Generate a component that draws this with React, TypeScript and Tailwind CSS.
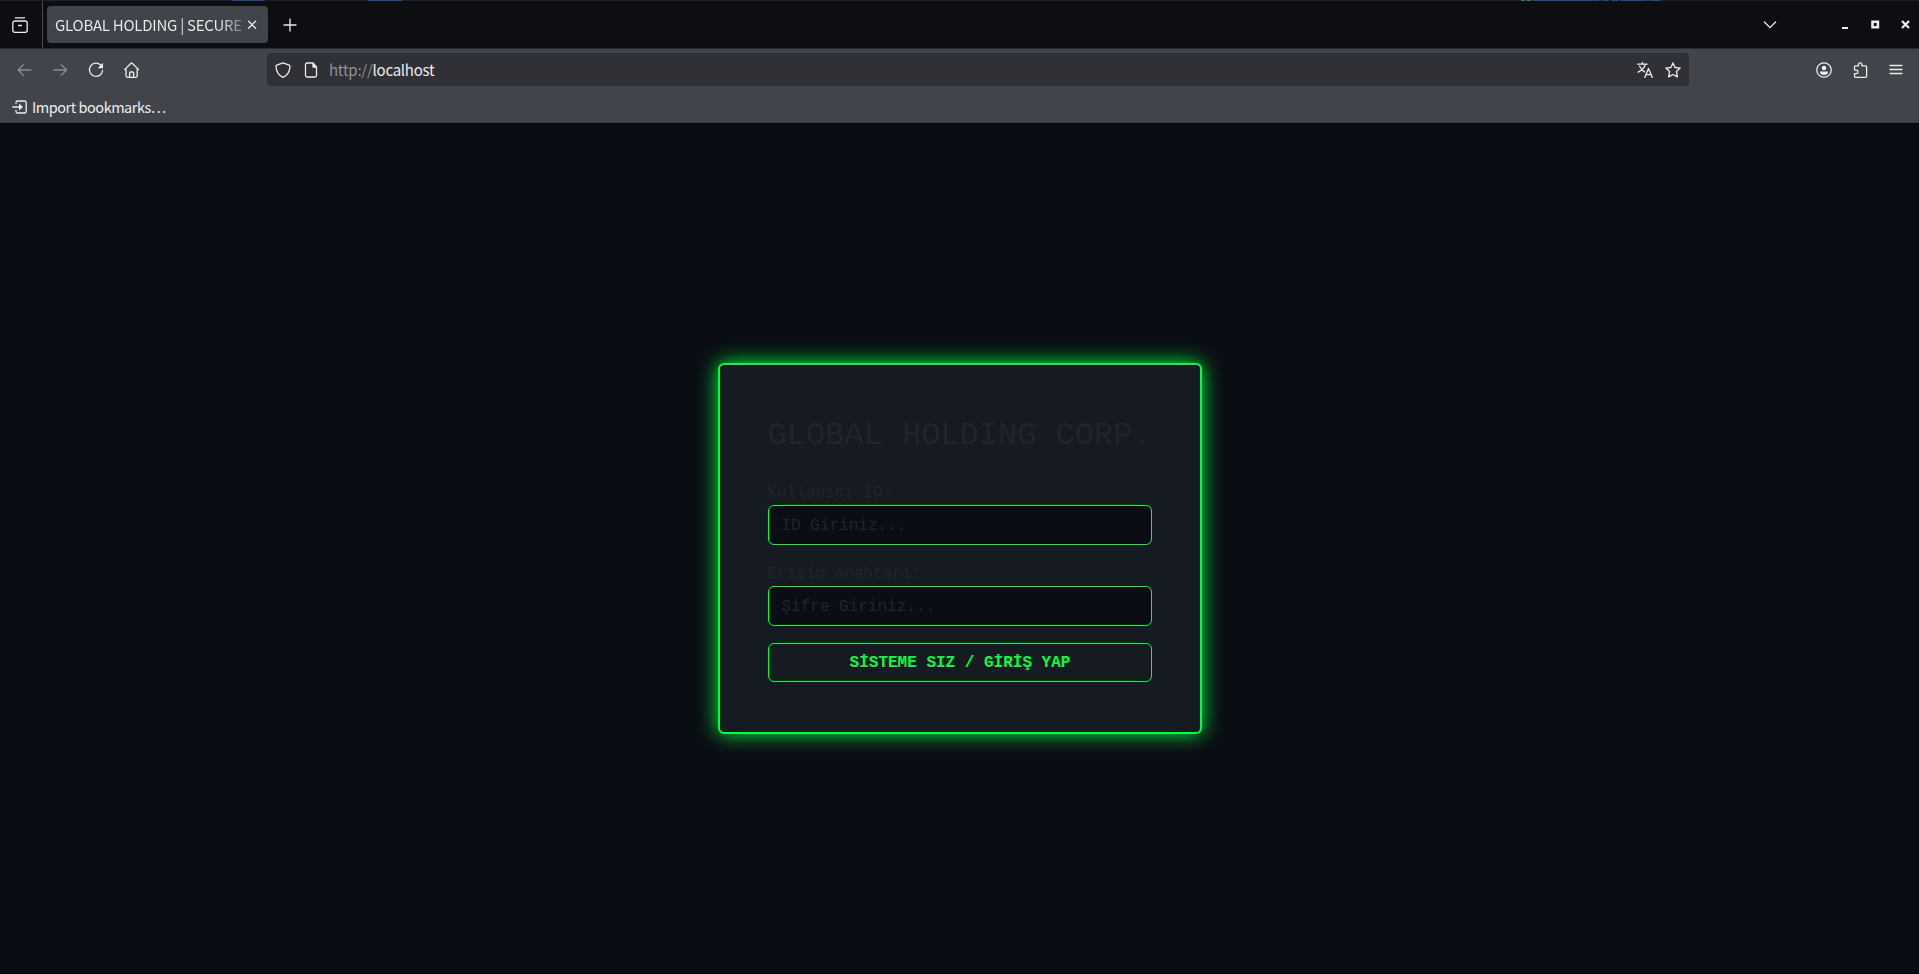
import type { ReactNode } from "react";

function Icon({ children, className = "" }: { children: ReactNode; className?: string }) {
  return (
    <svg
      viewBox="0 0 16 16"
      fill="none"
      stroke="currentColor"
      strokeWidth="1.3"
      strokeLinecap="round"
      strokeLinejoin="round"
      className={`size-4 shrink-0 ${className}`}
    >
      {children}
    </svg>
  );
}

function DesktopEdge() {
  return (
    <div className="flex h-px w-full shrink-0 bg-[#1c1f2c]">
      <div className="ml-[232px] w-8 bg-[#1e4a9a]" />
      <div className="ml-[104px] w-[34px] bg-[#1e4a9a]" />
      <div className="ml-[1119px] w-1 bg-[#0f8f7a]" />
      <div className="ml-[2px] w-1 bg-[#0f8f7a]" />
      <div className="ml-[2px] w-[65px] bg-[#1e4a9a]" />
      <div className="ml-px w-[2px] bg-[#1e4a9a]" />
      <div className="ml-[2px] w-[6px] bg-[#1e4a9a]" />
      <div className="ml-[3px] w-[6px] bg-[#1e4a9a]" />
      <div className="ml-[2px] w-[25px] bg-[#1e4a9a]" />
      <div className="ml-px w-[2px] bg-[#1e4a9a]" />
      <div className="ml-px w-[12px] bg-[#1e4a9a]" />
      <div className="flex-1 bg-[#231a22]" />
    </div>
  );
}

function TabStrip() {
  return (
    <div className="flex h-[47px] shrink-0 items-center bg-[#0d0e12] text-[#ececee]">
      <Icon className="ml-3">
        <path d="M3.4 .8h9.2M.8 6a2 2 0 0 1 2-2h10.4a2 2 0 0 1 2 2v7.300a2 2 0 0 1-2 2H2.8a2 2 0 0 1-2-2zM6.6 8.500h2.8" />
      </Icon>
      <div className="ml-[14px] h-[47px] w-px bg-[#4b4c52]" />
      <div className="ml-1 flex h-[37px] w-[221px] items-center rounded bg-[#42444b] pl-[8px]">
        <span className="w-[188px] bg-linear-to-r from-[#ececee] from-88% to-[#77787f] bg-clip-text font-['Noto_Sans_CJK_SC',sans-serif] text-[15px] leading-6 tracking-[-0.26px] whitespace-nowrap text-transparent">
          GLOBAL HOLDING | SECURE
        </span>
        <Icon className="ml-[1px]">
          <path d="M4.6 4.2l7 7M11.6 4.2l-7 7" />
        </Icon>
      </div>
      <Icon className="ml-[14px]">
        <path d="M8 2v12M2 8h12" />
      </Icon>
      <Icon className="ml-auto">
        <path d="M2.4 5l5.6 5.6L13.6 5" />
      </Icon>
      <svg viewBox="0 0 9 9" className="ml-[63px] size-[9px]">
        <path d="M1 7h6v2H1z" fill="currentColor" />
      </svg>
      <svg viewBox="0 0 9 9" className="ml-[21px] size-[9px]">
        <path d="M1.500 1.800h5.400v5.400H1.500z" fill="none" stroke="currentColor" strokeWidth="2.6" />
      </svg>
      <svg viewBox="0 0 9 9" className="mr-[9px] ml-[21px] size-[9px]">
        <path d="M1 1l7 7M8 1L1 8" stroke="currentColor" strokeWidth="2.2" />
      </svg>
    </div>
  );
}

function NavBar() {
  return (
    <div className="flex h-[41px] shrink-0 items-center text-[#ececee]">
      <Icon className="ml-4 text-[#8b8c91]">
        <path d="M7.500 2.6L2.100 8l5.400 5.400M2.100 8H15" />
      </Icon>
      <Icon className="ml-5 text-[#8b8c91]">
        <path d="M9.200 2.6L14.600 8l-5.400 5.400M14.600 8H1.700" />
      </Icon>
      <Icon className="ml-5">
        <path d="M12.8 3.2A6.6 6.6 0 1 0 14.6 8.5" />
        <path d="M15 .8v5.4H9.6z" fill="currentColor" stroke="none" />
      </Icon>
      <Icon className="ml-5">
        <path d="M.600 7.6L7 1.2a.9.9 0 0 1 1.2 0L14.600 7.6M2 6.8v7a1.5 1.5 0 0 0 1.5 1.5h8.2a1.5 1.5 0 0 0 1.5-1.5v-7M5.600 15v-4a1 1 0 0 1 1-1h2a1 1 0 0 1 1 1v4" />
      </Icon>
      <div className="ml-[127px] flex h-[33px] w-[1422px] items-center rounded bg-[#303136]">
        <Icon className="ml-2">
          <path d="M8 .8l6.2 2.4c.7.3.9.8.8 1.5-.4 4.9-2.4 8.600-7 10.700C3.400 13.300 1.400 9.600 1 4.700c-.1-.7.1-1.200.8-1.500z" />
        </Icon>
        <Icon className="ml-3">
          <path d="M9.500 1H4a1.500 1.500 0 0 0-1.500 1.500v11A1.500 1.500 0 0 0 4 15h8a1.500 1.500 0 0 0 1.500-1.500V5.500" />
          <path d="M10 1l3.500 4H10z" fill="currentColor" />
        </Icon>
        <span className="ml-[10px] font-['Noto_Sans_CJK_SC',sans-serif] text-[15px] leading-6 tracking-[-0.25px]">
          <span className="text-[#8f9095]">http://</span>localhost
        </span>
        <Icon className="ml-auto">
          <path d="M.7 2.200h9.400M5.400.5v1.700M8.400 2.400C7.500 5.700 4.700 8.400 1.200 10.200M2.600 4.200C4 7 5.500 8.700 7.500 9.900M7.800 15.400l3.700-9 3.800 9M9.200 12.600h4.700" />
        </Icon>
        <Icon className="mr-2 ml-3">
          <path d="M8 .9l2.100 4.600 5.100.6-3.800 3.500 1 5.300L8 12.500l-4.400 2.400 1-5.300L.8 6.100l5.100-.6z" />
        </Icon>
      </div>
      <Icon className="ml-auto">
        <circle cx="8" cy="8" r="7.200" />
        <circle cx="8" cy="6" r="2.300" fill="currentColor" stroke="none" />
        <path d="M3.900 9.400h8.200c0 2.300-1.700 3.600-4.100 3.600S3.900 11.700 3.900 9.400z" fill="currentColor" stroke="none" />
      </Icon>
      <Icon className="ml-5">
        <path d="M6.500 3.800V2.600a1.700 1.700 0 0 1 3.400 0v1.200h3.700a1 1 0 0 1 1 1v9.500a1 1 0 0 1-1 1H3.500a1 1 0 0 1-1-1v-2.600h1.700a1.800 1.800 0 0 0 0-3.600H2.500V4.800a1 1 0 0 1 1-1z" />
      </Icon>
      <Icon className="mr-[15px] ml-5">
        <path d="M2 3.500h12M2 7.500h12M2 11.500h12" />
      </Icon>
    </div>
  );
}

function BookmarksBar() {
  return (
    <div className="flex h-[33px] shrink-0 items-center border-b border-[#3a3c42] pt-px text-[#ececee]">
      <Icon className="ml-3">
        <path d="M4 4.500V3.500A1.500 1.500 0 0 1 5.500 2h7.200a1.500 1.500 0 0 1 1.500 1.500v9a1.500 1.500 0 0 1-1.500 1.500H5.500A1.500 1.500 0 0 1 4 12.500v-1M.8 8H9" />
        <path d="M7 4.400L11 8l-4 3.600z" fill="currentColor" stroke="none" />
      </Icon>
      <span className="ml-1 pt-px font-['Noto_Sans_CJK_SC',sans-serif] text-[14.5px] leading-6 tracking-[-0.47px]">
        Import bookmarks…
      </span>
    </div>
  );
}

function LoginCard() {
  return (
    <form className="w-[484px] rounded-md border-2 border-[#00ff41] bg-[#161a21] px-12 pt-12 pb-[50px] text-[#212529] shadow-[0_0_20px_#00ff41]">
      <h2 className="mb-[22px] text-[32px] leading-[45px] whitespace-nowrap">GLOBAL HOLDING CORP.</h2>
      <label className="block">
        <span className="block h-[25.6px] pt-px">Kullanıcı ID:</span>
        <input
          placeholder="ID Giriniz..."
          className="mb-4 block h-[39.6px] w-full rounded-md border border-[#00ff41] bg-[#0a0e14] pt-[2px] pr-3 pl-[13px] placeholder:text-[#212529]"
        />
      </label>
      <label className="block">
        <span className="block h-[25.6px] pt-px">Erişim Anahtarı:</span>
        <input
          placeholder="Şifre Giriniz..."
          className="mb-[17px] block h-[39.6px] w-full rounded-md border border-[#00ff41] bg-[#0a0e14] pt-[2px] pr-3 pl-[13px] placeholder:text-[#212529]"
        />
      </label>
      <button
        type="button"
        className="block h-[39.6px] w-full rounded-md border border-[#00ff41] pt-[3px] pl-px font-bold text-[#00ff41]"
      >
        SİSTEME SIZ / GİRİŞ YAP
      </button>
    </form>
  );
}

export default function App() {
  return (
    <div className="flex h-[974px] w-[1919px] flex-col overflow-hidden bg-[#42444b]">
      <DesktopEdge />
      <TabStrip />
      <div className="h-px shrink-0 bg-[#2b2c31]" />
      <NavBar />
      <BookmarksBar />
      <main className="flex flex-1 items-center justify-center border-b border-black bg-[#0a0e14] pt-px font-['Liberation_Mono',monospace] text-base leading-[25.6px]">
        <LoginCard />
      </main>
    </div>
  );
}
